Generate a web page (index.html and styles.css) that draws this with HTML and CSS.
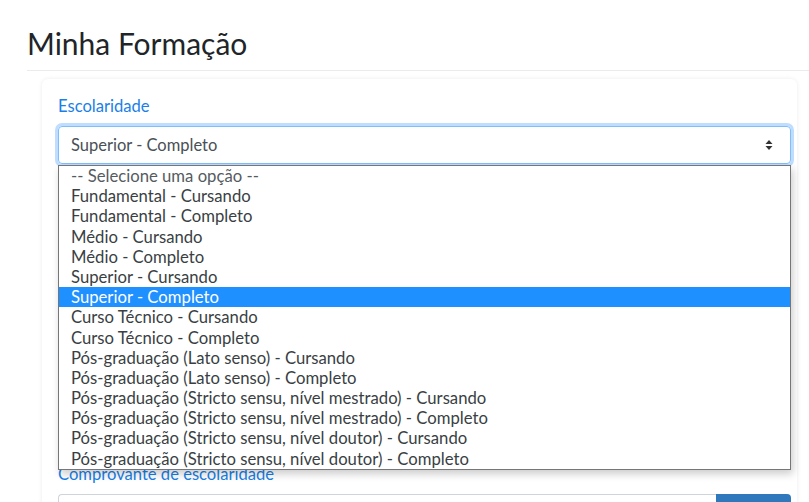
FILE: index.html
```html
<!DOCTYPE html>
<html lang="pt">
<head>
<meta charset="utf-8">
<title>Minha Formação</title>
<link rel="stylesheet" href="styles.css">
</head>
<body>
<div class="page">
  <h1 class="page-title">Minha Formação</h1>
  <div class="card">
    <div class="form-group">
      <label class="form-label">Escolaridade</label>
      <div class="select-wrap">
        <div class="select focus">
          <span class="select-value">Superior - Completo</span>
          <svg class="select-arrow" width="8" height="12" viewBox="0 0 8 12"><path d="M4 1 L7.5 5 H0.5 Z M4 11 L7.5 7 H0.5 Z" fill="#333"/></svg>
        </div>
        <ul class="dropdown">
          <li class="placeholder">-- Selecione uma opção --</li>
          <li>Fundamental - Cursando</li>
          <li>Fundamental - Completo</li>
          <li>Médio - Cursando</li>
          <li>Médio - Completo</li>
          <li>Superior - Cursando</li>
          <li class="selected">Superior - Completo</li>
          <li>Curso Técnico - Cursando</li>
          <li>Curso Técnico - Completo</li>
          <li>Pós-graduação (Lato senso) - Cursando</li>
          <li>Pós-graduação (Lato senso) - Completo</li>
          <li>Pós-graduação (Stricto sensu, nível mestrado) - Cursando</li>
          <li>Pós-graduação (Stricto sensu, nível mestrado) - Completo</li>
          <li>Pós-graduação (Stricto sensu, nível doutor) - Cursando</li>
          <li>Pós-graduação (Stricto sensu, nível doutor) - Completo</li>
        </ul>
      </div>
    </div>
    <div class="hidden-gap"></div>
    <div class="form-group">
      <label class="form-label">Comprovante de escolaridade</label>
      <div class="file-row">
        <div class="file-input"></div>
        <div class="file-btn"></div>
      </div>
    </div>
  </div>
</div>
</body>
</html>
```
FILE: styles.css
```css
* { box-sizing: border-box; }
html, body { margin: 0; padding: 0; background: #fff; }
body {
  font-family: Lato, "Open Sans", sans-serif;
  color: #212529;
}
.page {
  padding: 23px 0 0 27px;
  height: 502px;
  overflow: hidden;
}
.page-title {
  margin: 0;
  font-size: 30px;
  font-weight: 400;
  line-height: 40px;
  color: #212529;
  padding-bottom: 7px;
  border-bottom: 1px solid #e9ecef;
}
.card {
  margin: 8px 12px 0 15px;
  padding: 17px 6px 0 16px;
  border-radius: 6px;
  box-shadow: 0 0 4px rgba(0,0,0,0.08);
  height: 480px;
}
.form-label {
  display: block;
  color: #1a7fe8;
  font-size: 16.6px;
  line-height: 20px;
  margin-bottom: 10px;
}
.select-wrap { position: relative; }
.select {
  height: 38px;
  border: 1px solid #80bdff;
  border-radius: 4px;
  box-shadow: 0 0 0 3px rgba(0,123,255,0.25);
  display: flex;
  align-items: center;
  justify-content: space-between;
  padding: 0 17px 0 12px;
  font-size: 16.5px;
  color: #495057;
}
.dropdown {
  position: absolute;
  left: 0;
  top: 39px;
  width: 733px;
  margin: 0;
  padding: 0;
  list-style: none;
  background: #fff;
  border: 1px solid #767676;
  box-shadow: 2px 4px 8px rgba(0,0,0,0.2);
  z-index: 5;
}
.dropdown li {
  height: 20.2px;
  line-height: 20.2px;
  padding-left: 12px;
  font-size: 16.7px;
  color: #3a3f44;
  white-space: nowrap;
}
.dropdown li.placeholder { color: #555b61; }
.dropdown li.selected { background: #1e90ff; color: #fff; }
.hidden-gap { height: 300px; }
.file-row { display: flex; height: 38px; margin-top: 1px; }
.file-input {
  flex: 1;
  border: 1px solid #ced4da;
  border-right: none;
  border-radius: 4px 0 0 4px;
}
.file-btn {
  width: 75px;
  background: #3078bc;
  border-radius: 0 4px 4px 0;
}
```
